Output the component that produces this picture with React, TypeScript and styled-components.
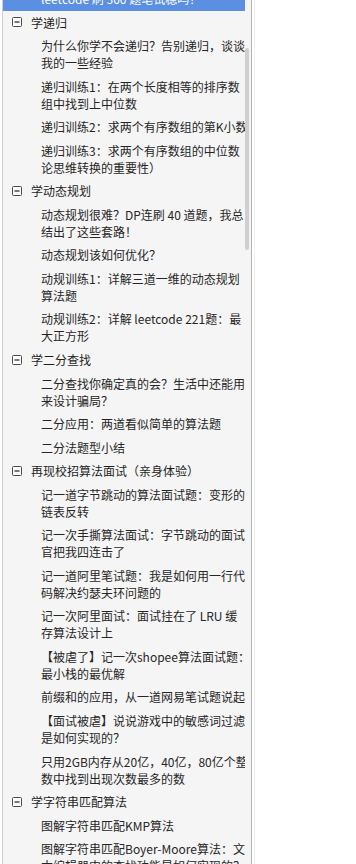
import React from 'react'
import styled, { createGlobalStyle } from 'styled-components'

const GlobalStyle = createGlobalStyle`
  html, body {
    margin: 0;
    padding: 0;
    background: #ffffff;
  }
  body {
    font-family: "Noto Sans CJK SC", "Noto Sans", sans-serif;
  }
`

type Group = {
  title: string
  items: string[][]
}

const groups: Group[] = [
  {
    title: '学递归',
    items: [
      ['为什么你学不会递归？告别递归，谈谈', '我的一些经验'],
      ['递归训练1：在两个长度相等的排序数', '组中找到上中位数'],
      ['递归训练2：求两个有序数组的第K小数'],
      ['递归训练3：求两个有序数组的中位数（', '论思维转换的重要性）'],
    ],
  },
  {
    title: '学动态规划',
    items: [
      ['动态规划很难？DP连刷 40 道题，我总', '结出了这些套路！'],
      ['动态规划该如何优化？'],
      ['动规训练1：详解三道一维的动态规划', '算法题'],
      ['动规训练2：详解 leetcode 221题：最', '大正方形'],
    ],
  },
  {
    title: '学二分查找',
    items: [
      ['二分查找你确定真的会？生活中还能用', '来设计骗局？'],
      ['二分应用：两道看似简单的算法题'],
      ['二分法题型小结'],
    ],
  },
  {
    title: '再现校招算法面试（亲身体验）',
    items: [
      ['记一道字节跳动的算法面试题：变形的', '链表反转'],
      ['记一次手撕算法面试：字节跳动的面试', '官把我四连击了'],
      ['记一道阿里笔试题：我是如何用一行代', '码解决约瑟夫环问题的'],
      ['记一次阿里面试：面试挂在了 LRU 缓', '存算法设计上'],
      ['【被虐了】记一次shopee算法面试题：', '最小栈的最优解'],
      ['前缀和的应用，从一道网易笔试题说起'],
      ['【面试被虐】说说游戏中的敏感词过滤', '是如何实现的？'],
      ['只用2GB内存从20亿，40亿，80亿个整', '数中找到出现次数最多的数'],
    ],
  },
  {
    title: '学字符串匹配算法',
    items: [
      ['图解字符串匹配KMP算法'],
      ['图解字符串匹配Boyer-Moore算法：文', '本编辑器中的查找功能是如何实现的？'],
    ],
  },
]

const Page = styled.div`
  display: flex;
  height: 864px;
  overflow: hidden;
`

const Panel = styled.div`
  margin-left: 2px;
  width: 248px;
  height: 100%;
  display: flex;
  background: #f5f5f5;
  border-left: 1px solid #cfcfcf;
  border-right: 1px solid #b4b4b4;
`

const Edge = styled.div`
  width: 1px;
  margin-left: 2px;
  height: 100%;
  background: #efefef;
`

const List = styled.div`
  flex: 1;
  overflow: hidden;
`

const Scroller = styled.div`
  margin-top: -13px;
`

const Track = styled.div`
  position: relative;
  width: 6px;
  flex: none;
`

const Thumb = styled.div`
  position: absolute;
  top: 48px;
  left: 0;
  width: 4px;
  height: 202px;
  border-radius: 2px;
  background: #cfcfcf;
`

const Row = styled.div<{ $active?: boolean }>`
  padding: 3px 0 3.55px 38px;
  font-size: 12px;
  line-height: 17px;
  color: ${(p) => (p.$active ? '#ffffff' : '#262626')};
  background: ${(p) => (p.$active ? '#5b8fe2' : 'transparent')};
`

const Line = styled.span`
  display: block;
  white-space: nowrap;
`

const Header = styled.div`
  display: flex;
  align-items: center;
  gap: 9px;
  padding: 3px 0 3.55px 9px;
  font-size: 12px;
  line-height: 17px;
  color: #1e1e1e;
`

const Toggle = styled.svg`
  flex: none;
  width: 10px;
  height: 10px;
`

const MinusBox = () => (
  <Toggle viewBox="0 0 10 10">
    <rect x="0.5" y="0.5" width="9" height="9" rx="1" fill="#fbfbfb" stroke="#4a4a4a" />
    <line x1="2.5" y1="5" x2="7.5" y2="5" stroke="#222" strokeWidth="1.2" />
  </Toggle>
)

const Item = ({ lines, active }: { lines: string[]; active?: boolean }) => (
  <Row $active={active}>
    {lines.map((l) => (
      <Line key={l}>{l}</Line>
    ))}
  </Row>
)

export default function App() {
  return (
    <>
      <GlobalStyle />
      <Page>
        <Panel>
          <List>
            <Scroller>
              <Item active lines={['leetcode 刷 300 题笔试稳吗？']} />
              {groups.map((g) => (
                <div key={g.title}>
                  <Header>
                    <MinusBox />
                    <span>{g.title}</span>
                  </Header>
                  {g.items.map((lines) => (
                    <Item key={lines[0]} lines={lines} />
                  ))}
                </div>
              ))}
            </Scroller>
          </List>
          <Track>
            <Thumb />
          </Track>
        </Panel>
        <Edge />
      </Page>
    </>
  )
}
